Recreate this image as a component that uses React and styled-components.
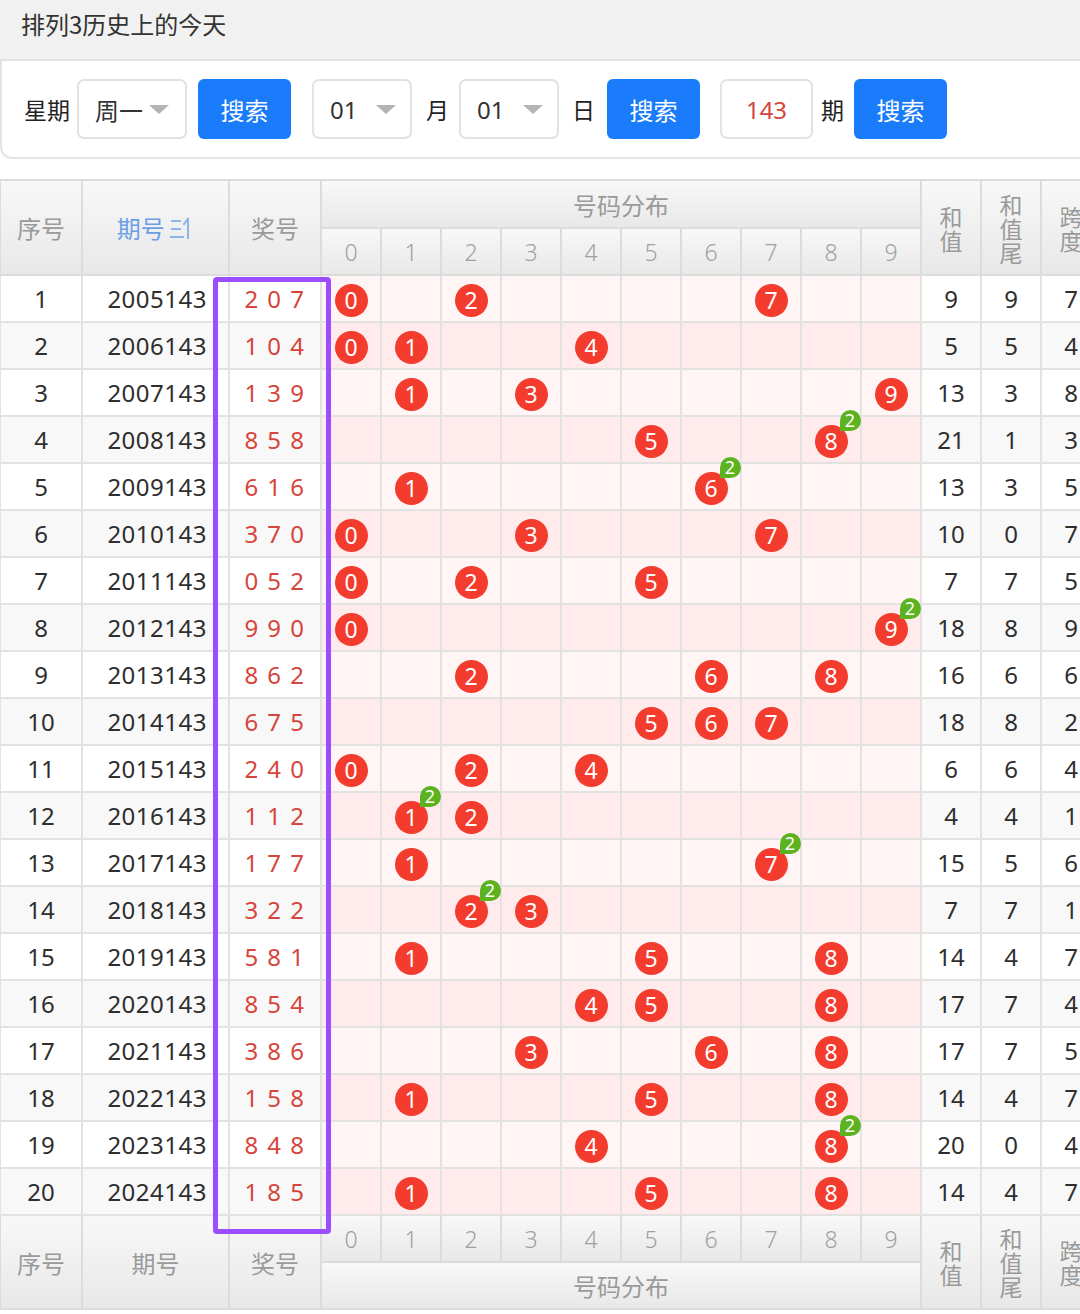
import React from 'react'
import styled, { createGlobalStyle } from 'styled-components'

const GlobalStyle = createGlobalStyle`
  html, body {
    margin: 0;
    padding: 0;
    background: #fff;
    overflow-x: hidden;
  }
  body {
    font-family: "Noto Sans", "Noto Sans CJK SC", sans-serif;
    color: #333;
  }
`

const draws = [
  ['2005143', '207'], ['2006143', '104'], ['2007143', '139'], ['2008143', '858'],
  ['2009143', '616'], ['2010143', '370'], ['2011143', '052'], ['2012143', '990'],
  ['2013143', '862'], ['2014143', '675'], ['2015143', '240'], ['2016143', '112'],
  ['2017143', '177'], ['2018143', '322'], ['2019143', '581'], ['2020143', '854'],
  ['2021143', '386'], ['2022143', '158'], ['2023143', '848'], ['2024143', '185'],
]

const rows = draws.map(([issue, num], i) => {
  const d = num.split('').map(Number)
  const sum = d[0] + d[1] + d[2]
  return {
    no: i + 1,
    issue,
    digits: d,
    sum,
    tail: sum % 10,
    span: Math.max(...d) - Math.min(...d),
  }
})

const widths = [82, 147, 92, 60, 60, 60, 60, 60, 60, 60, 60, 60, 60, 60, 60, 60]
const digitsList = [0, 1, 2, 3, 4, 5, 6, 7, 8, 9]

const Page = () => {
  return (
    <>
      <GlobalStyle />
      <TitleBar>排列3历史上的今天</TitleBar>
      <SearchPanel>
        <Label>星期</Label>
        <Select $w={110} $ml={7}>
          <span>周一</span>
          <Caret />
        </Select>
        <Button $ml={11}>搜索</Button>
        <Select $w={100} $ml={21} $spread>
          <span>01</span>
          <Caret />
        </Select>
        <Label $ml={14}>月</Label>
        <Select $w={100} $ml={10} $spread>
          <span>01</span>
          <Caret />
        </Select>
        <Label $ml={13}>日</Label>
        <Button $ml={12}>搜索</Button>
        <IssueInput $ml={20}>143</IssueInput>
        <Label $ml={8}>期</Label>
        <Button $ml={10}>搜索</Button>
      </SearchPanel>

      <TableWrap>
        <Table>
          <colgroup>
            {widths.map((w, i) => (
              <Col key={i} $w={w} />
            ))}
          </colgroup>
          <thead>
            <tr>
              <HeadCell rowSpan={2}>序号</HeadCell>
              <HeadCell rowSpan={2} $active>
                期号 <SortIcon />
              </HeadCell>
              <HeadCell rowSpan={2}>奖号</HeadCell>
              <HeadCell colSpan={10} $h={46}>号码分布</HeadCell>
              <HeadCell rowSpan={2}><Stack>和值</Stack></HeadCell>
              <HeadCell rowSpan={2}><Stack>和值尾</Stack></HeadCell>
              <HeadCell rowSpan={2}><Stack>跨度</Stack></HeadCell>
            </tr>
            <tr>
              {digitsList.map((d) => (
                <DigitHead key={d} $h={45}>{d}</DigitHead>
              ))}
            </tr>
          </thead>
          <tbody>
            {rows.map((r) => (
              <Row key={r.no} $even={r.no % 2 === 0}>
                <Cell>{r.no}</Cell>
                <IssueCell>{r.issue}</IssueCell>
                <PrizeCell>{r.digits.join(' ')}</PrizeCell>
                {digitsList.map((d) => {
                  const count = r.digits.filter((x) => x === d).length
                  return (
                    <DistCell key={d} $even={r.no % 2 === 0}>
                      {count > 0 && (
                        <Ball>
                          {d}
                          {count > 1 && <Badge>{count}</Badge>}
                        </Ball>
                      )}
                    </DistCell>
                  )
                })}
                <Cell>{r.sum}</Cell>
                <Cell>{r.tail}</Cell>
                <Cell>{r.span}</Cell>
              </Row>
            ))}
          </tbody>
          <tfoot>
            <tr>
              <HeadCell rowSpan={2}>序号</HeadCell>
              <HeadCell rowSpan={2}>期号</HeadCell>
              <HeadCell rowSpan={2}>奖号</HeadCell>
              {digitsList.map((d) => (
                <DigitHead key={d} $h={45}>{d}</DigitHead>
              ))}
              <HeadCell rowSpan={2}><Stack>和值</Stack></HeadCell>
              <HeadCell rowSpan={2}><Stack>和值尾</Stack></HeadCell>
              <HeadCell rowSpan={2}><Stack>跨度</Stack></HeadCell>
            </tr>
            <tr>
              <HeadCell colSpan={10} $h={45}>号码分布</HeadCell>
            </tr>
          </tfoot>
        </Table>
        <Highlight />
      </TableWrap>
    </>
  )
}

const SortIcon = () => (
  <svg width="24" height="24" viewBox="0 0 24 24" style={{ verticalAlign: '-3px' }}>
    <g stroke="#8db5ea" strokeWidth="2" fill="none" strokeLinecap="square">
      <line x1="2" y1="4" x2="10" y2="4" />
      <line x1="2" y1="12" x2="10" y2="12" />
      <line x1="1" y1="20" x2="13" y2="20" />
      <line x1="18" y1="2" x2="18" y2="21" />
      <line x1="18" y1="2" x2="14" y2="7" />
    </g>
  </svg>
)

export default function App() {
  return <Page />
}

const TitleBar = styled.div`
  height: 61px;
  box-sizing: border-box;
  background: #f1f1f1;
  border-bottom: 2px solid #e2e2e2;
  padding: 7px 0 0 21px;
  font-family: "Noto Sans CJK SC", sans-serif;
  font-size: 24px;
  color: #333;
  line-height: 34px;
`

const SearchPanel = styled.div`
  height: 98px;
  box-sizing: border-box;
  display: flex;
  align-items: center;
  padding-left: 22px;
  border-left: 2px solid #e4e4e4;
  border-bottom: 2px solid #e4e4e4;
  border-bottom-left-radius: 12px;
  background: #fff;
`

const Label = styled.span`
  margin-left: ${(p) => p.$ml || 0}px;
  font-family: "Noto Sans CJK SC", sans-serif;
  font-size: 23px;
  color: #222;
`

const Select = styled.div`
  margin-left: ${(p) => p.$ml}px;
  width: ${(p) => p.$w}px;
  height: 60px;
  box-sizing: border-box;
  border: 2px solid #e2e2e2;
  border-radius: 7px;
  display: flex;
  align-items: center;
  justify-content: ${(p) => (p.$spread ? 'space-between' : 'flex-start')};
  gap: 6px;
  padding: 0 14px 0 16px;
  font-family: "Noto Sans", "Noto Sans CJK SC", sans-serif;
  font-size: 24px;
  color: #333;
`

const Caret = styled.i`
  width: 0;
  height: 0;
  border-left: 10px solid transparent;
  border-right: 10px solid transparent;
  border-top: 9px solid #b4b4b4;
`

const Button = styled.div`
  margin-left: ${(p) => p.$ml}px;
  width: 93px;
  height: 60px;
  border-radius: 6px;
  background: #1a7bfb;
  color: #fff;
  display: flex;
  align-items: center;
  justify-content: center;
  font-family: "Noto Sans CJK SC", sans-serif;
  font-size: 24px;
`

const IssueInput = styled.div`
  margin-left: ${(p) => p.$ml}px;
  width: 93px;
  height: 60px;
  box-sizing: border-box;
  border: 2px solid #e2e2e2;
  border-radius: 7px;
  display: flex;
  align-items: center;
  justify-content: center;
  font-size: 24px;
  color: #d6453b;
`

const TableWrap = styled.div`
  position: relative;
  margin-top: 20px;
  width: 1080px;
  overflow: hidden;
`

const Table = styled.table`
  border-collapse: collapse;
  table-layout: fixed;
  width: 1103px;
  margin-left: -1px;
`

const Col = styled.col`
  width: ${(p) => p.$w}px;
`

const HeadCell = styled.th`
  height: ${(p) => p.$h || 45}px;
  padding: 0;
  border: 2px solid #dcdcdc;
  background: linear-gradient(#f8f8f8, #e8e8e8);
  font-family: "Noto Sans CJK SC", sans-serif;
  font-weight: 400;
  font-size: 24px;
  color: ${(p) => (p.$active ? '#6a9fe5' : '#9a9a9a')};
  text-align: center;
  white-space: nowrap;
`

const DigitHead = styled(HeadCell)`
  font-family: "Noto Sans", sans-serif;
  font-weight: 300;
  font-size: 23px;
  color: #a0a0a0;
`

const Stack = styled.div`
  width: 1em;
  margin: 0 auto;
  white-space: normal;
  font-size: 23px;
  line-height: 24px;
`

const Row = styled.tr`
  height: 47px;
  background: ${(p) => (p.$even ? '#f8f8f8' : '#fff')};
`

const Cell = styled.td`
  padding: 0;
  border: 2px solid #e2e2e2;
  text-align: center;
  font-size: 24px;
  color: #2e2e2e;
`

const IssueCell = styled(Cell)`
  text-align: right;
  padding-right: 21px;
  letter-spacing: 0.5px;
`

const PrizeCell = styled(Cell)`
  color: #d6453b;
  letter-spacing: 1.5px;
  white-space: pre;
`

const DistCell = styled(Cell)`
  background: ${(p) => (p.$even ? '#ffebeb' : '#fff5f4')};
`

const Ball = styled.span`
  position: relative;
  display: inline-flex;
  align-items: center;
  justify-content: center;
  width: 33px;
  height: 33px;
  border-radius: 50%;
  background: #f33b2e;
  color: #fff;
  font-size: 23px;
  vertical-align: middle;
`

const Badge = styled.span`
  position: absolute;
  top: -15px;
  right: -13px;
  width: 21px;
  height: 21px;
  border-radius: 50% 50% 50% 0;
  background: #5cb31f;
  color: #fff;
  font-size: 18px;
  line-height: 21px;
  text-align: center;
`

const Highlight = styled.div`
  position: absolute;
  top: 98px;
  left: 213px;
  width: 118px;
  height: 957px;
  box-sizing: border-box;
  border: 5px solid #9b4dff;
  border-radius: 4px;
  pointer-events: none;
`
